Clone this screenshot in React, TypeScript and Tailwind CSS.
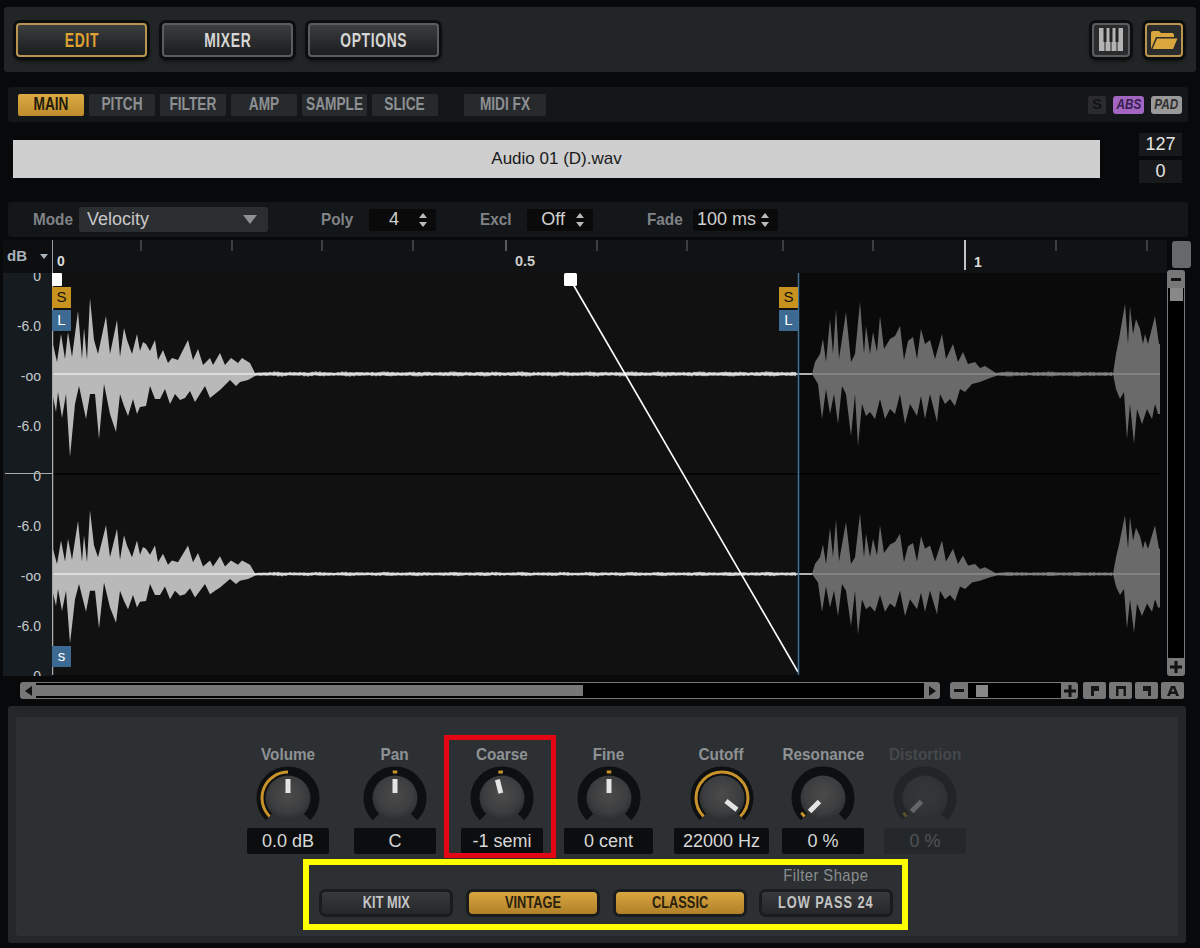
import React from "react";

type Pt = [number, number];

const sans = "font-['Liberation_Sans',sans-serif]";

// wave outlines, read off the picture: [x, height above or below the centre line]
const leftUp: Pt[] = [[52,34],[57,12],[61,40],[65,15],[68,42],[72,17],[78,63],[82,15],[84,46],[87,14],[90,76],[94,34],[98,20],[106,58],[110,20],[117,54],[120,17],[124,46],[127,34],[132,20],[137,40],[140,23],[143,32],[146,30],[150,23],[155,34],[158,14],[163,24],[168,11],[172,16],[178,14],[188,34],[193,14],[198,25],[203,9],[210,16],[213,9],[220,21],[225,9],[231,16],[238,11],[242,16],[250,11],[255,1]];
const leftDown: Pt[] = [[52,18],[56,38],[58,18],[62,44],[66,20],[70,83],[75,30],[79,12],[86,45],[90,20],[95,20],[99,65],[104,10],[110,40],[116,58],[120,20],[124,32],[128,42],[133,25],[137,40],[140,33],[146,32],[150,12],[155,25],[160,25],[165,15],[170,30],[175,20],[180,26],[185,24],[190,17],[195,28],[200,20],[205,12],[210,24],[215,20],[220,16],[230,6],[236,12],[240,8],[248,6],[255,2]];
const rightUp: Pt[] = [[812,0],[815,12],[820,20],[823,35],[826,12],[830,55],[833,20],[836,65],[839,15],[846,62],[851,12],[855,20],[860,72],[864,20],[866,48],[870,20],[873,42],[877,22],[880,58],[884,25],[890,35],[895,38],[900,48],[904,14],[908,33],[913,37],[917,15],[921,45],[925,30],[930,34],[935,15],[942,40],[946,15],[953,30],[958,12],[963,22],[968,10],[975,12],[980,6],[985,8],[996,1]];
const rightDown: Pt[] = [[812,0],[818,10],[822,45],[826,15],[830,40],[834,20],[838,50],[842,12],[846,20],[851,62],[855,20],[858,72],[862,30],[866,42],[870,38],[875,45],[880,25],[885,45],[890,35],[895,40],[900,20],[905,50],[910,30],[917,42],[921,22],[925,45],[930,20],[937,48],[940,20],[945,30],[950,25],[955,32],[960,15],[965,18],[972,10],[980,8],[990,4],[996,2]];
const endUp: Pt[] = [[1113,0],[1116,20],[1119,35],[1125,70],[1128,30],[1130,68],[1133,40],[1136,55],[1140,45],[1143,30],[1145,40],[1148,30],[1155,58],[1159,30],[1160,30]];
const endDown: Pt[] = [[1113,0],[1116,15],[1120,25],[1124,18],[1127,65],[1130,30],[1134,70],[1137,35],[1142,50],[1147,35],[1152,45],[1155,30],[1158,40],[1160,40]];

function noise(from: number, to: number, seed: number): Pt[] {
  const pts: Pt[] = [];
  for (let x = from; x < to; x += 2) {
    const n = Math.sin(x * 1.7 + seed) * 0.5 + Math.sin(x * 0.23 + seed) * 0.7 + Math.sin(x * 0.05 + seed) * 0.4;
    pts.push([x, 1.3 + Math.abs(n)]);
  }
  return pts;
}

function outline(up: Pt[], down: Pt[], cy: number, k: number) {
  const top = up.map(([x, h]) => `${x},${cy - h * k}`);
  const bottom = [...down].reverse().map(([x, h]) => `${x},${cy + h * k}`);
  return [...top, ...bottom].join(" ");
}

function Channel({ cy, k }: { cy: number; k: number }) {
  const left = outline([...leftUp, ...noise(258, 798, 1)], [...leftDown, ...noise(258, 798, 3)], cy, k);
  const right = outline(
    [...rightUp, ...noise(998, 1113, 2), ...endUp],
    [...rightDown, ...noise(998, 1113, 5), ...endDown],
    cy,
    k,
  );
  return (
    <g>
      <polygon points={left} fill="#b9b9b9" />
      <polygon points={right} fill="#6a6a6a" />
      <line x1="52" x2="812" y1={cy} y2={cy} stroke="#e8e8e8" strokeWidth="1.5" />
      <line x1="812" x2="1160" y1={cy} y2={cy} stroke="#999" strokeWidth="1.2" />
    </g>
  );
}

function Waveform() {
  return (
    <svg width="1108" height="402" viewBox="52 273 1108 402" className="block">
      <rect x="52" y="273" width="746" height="402" fill="#111111" />
      <rect x="798" y="273" width="362" height="402" fill="#0a0a0a" />
      <Channel cy={374} k={1} />
      <Channel cy={574} k={0.84} />
      <line x1="52" x2="1160" y1="474" y2="474" stroke="#000" strokeWidth="1.5" />
      <line x1="52.5" x2="52.5" y1="273" y2="675" stroke="#aaa" strokeWidth="1.5" />
      <line x1="570" y1="279" x2="798" y2="672" stroke="#fff" strokeWidth="1.6" />
      <line x1="798.5" x2="798.5" y1="273" y2="675" stroke="#3f7199" strokeWidth="1.5" />
      <rect x="52" y="273" width="10" height="13" rx="1" fill="#fff" />
      <rect x="564" y="273" width="13" height="13" rx="1.5" fill="#fff" />
    </svg>
  );
}

function Ruler() {
  const small = [141, 232, 322, 413, 506, 597, 687, 783, 873, 1056, 1147];
  return (
    <svg width="1115" height="33" viewBox="52 240 1115 33" className="block">
      <rect x="52" y="240" width="1115" height="33" fill="#101214" />
      {small.map((x) => (
        <line key={x} x1={x} x2={x} y1="240" y2="251" stroke={x === 506 ? "#8a8a8a" : "#5c5c5c"} strokeWidth="1.2" />
      ))}
      <line x1="52" x2="52" y1="240" y2="273" stroke="#ccc" strokeWidth="1.5" />
      <line x1="965" x2="965" y1="240" y2="270" stroke="#fff" strokeWidth="1.5" />
      <text x="57" y="266" fill="#ddd" fontSize="14" fontWeight="700" fontFamily="Liberation Sans">0</text>
      <text x="515" y="266" fill="#ccc" fontSize="14.5" fontWeight="700" fontFamily="Liberation Sans">0.5</text>
      <text x="974" y="267" fill="#ddd" fontSize="14" fontWeight="700" fontFamily="Liberation Sans">1</text>
    </svg>
  );
}

function polar(r: number, deg: number): Pt {
  const a = ((deg - 90) * Math.PI) / 180;
  return [40 + r * Math.cos(a), 40 + r * Math.sin(a)];
}

function arc(r: number, from: number, to: number) {
  const [x1, y1] = polar(r, from);
  const [x2, y2] = polar(r, to);
  return `M${x1} ${y1}A${r} ${r} 0 ${to - from > 180 ? 1 : 0} 1 ${x2} ${y2}`;
}

function Knob({ from, to, angle, dim }: { from: number; to: number; angle: number; dim?: boolean }) {
  const id = `knob${from}${to}${angle}${dim ? "d" : ""}`;
  return (
    <svg width="80" height="70" viewBox="0 0 80 70" className={dim ? "block opacity-30" : "block"}>
      <defs>
        <radialGradient id={id} cx="0.5" cy="0.42" r="0.58">
          <stop offset="0" stopColor="#4b4b4c" />
          <stop offset="0.7" stopColor="#3c3d3e" />
          <stop offset="1" stopColor="#2b2d2f" />
        </radialGradient>
      </defs>
      <path d={arc(26.5, -135, 135)} fill="none" stroke="#0e0f10" strokeWidth="10" />
      <path d={arc(26, from, to)} fill="none" stroke="#c8932a" strokeWidth="3" />
      <circle cx="40" cy="40" r="22.5" fill={`url(#${id})`} />
      <rect x="37.5" y="21" width="5" height="14" fill="#e4e4e4" transform={`rotate(${angle} 40 40)`} />
    </svg>
  );
}

function KnobCol({ label, value, from, to, angle, w, dim, className }: {
  label: string; value: string; from: number; to: number; angle: number; w: string; dim?: boolean; className: string;
}) {
  return (
    <div className={`${w} ${className} flex flex-col items-center`}>
      <div className={`h-[20px] leading-[20px] text-[17px] font-bold whitespace-nowrap ${sans} ${dim ? "text-[#45484a]" : "text-[#8f9294]"}`}>
        <span className="inline-block scale-x-[0.9]">{label}</span>
      </div>
      <div className="-mt-[7px]">
        <Knob from={from} to={to} angle={angle} dim={dim} />
      </div>
      <div className={`w-full h-[26px] rounded-[2px] flex items-center justify-center text-[18px] whitespace-nowrap ${sans} ${dim ? "bg-[#25282a] text-[#505355]" : "bg-[#0c0d0e] text-[#d8d8d8]"}`}>
        {value}
      </div>
    </div>
  );
}

function TopButton({ label, active }: { label: string; active?: boolean }) {
  return (
    <div className={`w-[131px] h-[34px] rounded-[4px] border-2 flex items-center justify-center bg-gradient-to-b from-[#3c3d3e] to-[#1c1d1e] shadow-[0_0_0_3px_#0c0d0e,0_3px_5px_#000] text-[21px] font-bold tracking-[1px] whitespace-nowrap ${sans} ${active ? "border-[#b8954e] text-[#dfa332]" : "border-[#5a5c5d] text-[#d6d6d6]"}`}>
      <span className="inline-block scale-x-[0.66]">{label}</span>
    </div>
  );
}

function Tab({ label, active, className }: { label: string; active?: boolean; className: string }) {
  return (
    <div className={`${className} h-[22px] rounded-[2px] flex items-center justify-center text-[18px] font-bold whitespace-nowrap ${sans} ${active ? "bg-gradient-to-b from-[#dcaa42] to-[#bd8c2c] text-[#231c0c]" : "bg-[#272a2d] text-[#8d9092]"}`}>
      <span className="inline-block scale-x-[0.76]">{label}</span>
    </div>
  );
}

function FieldLabel({ text, className }: { text: string; className: string }) {
  return (
    <span className={`${className} text-[17px] font-bold text-[#808386] ${sans}`}>
      <span className="inline-block origin-left scale-x-[0.9]">{text}</span>
    </span>
  );
}

function Stepper({ text, w, pr }: { text: string; w: string; pr: string }) {
  return (
    <div className={`${w} h-[22px] bg-[#0a0a0b] rounded-[2px] flex items-center justify-end pr-[8px] text-[#d0d0d0] text-[18px] whitespace-nowrap ${sans}`}>
      <span className={pr}>{text}</span>
      <svg width="10" height="16" viewBox="0 0 10 16">
        <path d="M5 1 9 6H1Z" fill="#bbb" />
        <path d="M1 10H9L5 15Z" fill="#bbb" />
      </svg>
    </div>
  );
}

function FilterButton({ label, active, spaced }: { label: string; active?: boolean; spaced?: boolean }) {
  return (
    <div className={`w-[128px] h-[22px] rounded-[4px] flex items-center justify-center text-[16px] font-bold whitespace-nowrap shadow-[0_0_0_3px_#191b1d] ${sans} ${spaced ? "tracking-[1.2px]" : ""} ${active ? "bg-gradient-to-b from-[#d8a640] to-[#b08029] text-[#2a210e]" : "bg-gradient-to-b from-[#37393b] to-[#25272a] text-[#c4c4c4]"}`}>
      <span className="inline-block scale-x-[0.8]">{label}</span>
    </div>
  );
}

function SmallSquare({ d }: { d: string }) {
  return (
    <div className="w-[23px] h-[17px] rounded-[2px] bg-[#777] flex items-center justify-center">
      <svg width="14" height="12" viewBox="0 0 14 12">
        <path d={d} fill="#161616" />
      </svg>
    </div>
  );
}

function Marker({ text, tone, pos }: { text: string; tone: string; pos: string }) {
  return (
    <div className={`absolute ${pos} ${tone} w-[19px] h-[21px] flex items-center justify-center text-[15px] ${sans}`}>
      {text}
    </div>
  );
}

export default function App() {
  return (
    <div className="relative w-[1200px] h-[948px] overflow-hidden bg-[#08090a] flex flex-col">
      {/* top bar */}
      <div className="mt-[7px] mx-[4px] h-[65px] rounded-[3px] bg-[#222525] flex items-center pl-[12px] pr-[13px] gap-[15px]">
        <TopButton label="EDIT" active />
        <TopButton label="MIXER" />
        <TopButton label="OPTIONS" />
        <div className="ml-auto w-[38px] h-[34px] rounded-[4px] border-2 border-[#5a5c5d] bg-[#2a2b2c] shadow-[0_0_0_3px_#0c0d0e,0_3px_5px_#000] flex items-center justify-center">
          <svg width="24" height="23" viewBox="0 0 24 23">
            <rect width="24" height="23" fill="#b4b4b4" />
            <rect x="4.5" y="0" width="3" height="14" fill="#232323" />
            <rect x="10.5" y="0" width="3" height="14" fill="#232323" />
            <rect x="16.5" y="0" width="3" height="14" fill="#232323" />
            <rect x="5.5" y="14" width="1" height="9" fill="#232323" />
            <rect x="11.5" y="14" width="1" height="9" fill="#232323" />
            <rect x="17.5" y="14" width="1" height="9" fill="#232323" />
          </svg>
        </div>
        <div className="w-[38px] h-[34px] rounded-[4px] border-2 border-[#b8954e] bg-[#2a2b2c] shadow-[0_0_0_3px_#0c0d0e,0_3px_5px_#000] flex items-center justify-center">
          <svg width="28" height="20" viewBox="0 0 28 20">
            <path d="M1 19V3Q1 1 3 1H9L11 3H22Q24 3 24 5V7H6L1 19Z" fill="#d9a73d" />
            <path d="M7 8.5H27.5L23 19H2.5Z" fill="#d9a73d" />
          </svg>
        </div>
      </div>

      {/* tab row */}
      <div className="mt-[15px] mx-[8px] w-[1180px] h-[35px] rounded-[3px] bg-[#14171a] flex items-center pl-[10px] pr-[6px] gap-[5px]">
        <Tab label="MAIN" active className="w-[66px]" />
        <Tab label="PITCH" className="w-[66px]" />
        <Tab label="FILTER" className="w-[66px]" />
        <Tab label="AMP" className="w-[66px]" />
        <Tab label="SAMPLE" className="w-[65px]" />
        <Tab label="SLICE" className="w-[66px]" />
        <Tab label="MIDI FX" className="w-[82px] ml-[21px]" />
        <div className={`ml-auto w-[18px] h-[18px] rounded-[2px] bg-[#292b2d] text-[#121314] text-[15px] font-bold flex items-center justify-center ${sans}`}>S</div>
        <div className={`ml-[2px] w-[31px] h-[18px] rounded-[3px] bg-[#a266c0] text-[#371d50] text-[15px] font-bold italic flex items-center justify-center ${sans}`}>
          <span className="inline-block scale-x-[0.78]">ABS</span>
        </div>
        <div className={`ml-[2px] w-[31px] h-[18px] rounded-[3px] bg-[#999] text-[#2f2f2f] text-[15px] font-bold italic flex items-center justify-center ${sans}`}>
          <span className="inline-block scale-x-[0.78]">PAD</span>
        </div>
      </div>

      {/* sample zone */}
      <div className="h-[80px] flex items-start">
        <div className={`mt-[18px] ml-[13px] w-[1087px] h-[38px] bg-[#cfcfcf] flex items-center justify-center text-[17px] text-[#1a1a1a] ${sans}`}>
          Audio 01 (D).wav
        </div>
        <div className={`mt-[11px] ml-[39px] w-[43px] flex flex-col gap-[4px] text-[#e6e6e6] text-[18px] ${sans}`}>
          <div className="h-[23px] bg-[#17191a] flex items-center justify-center">127</div>
          <div className="h-[23px] bg-[#17191a] flex items-center justify-center">0</div>
        </div>
      </div>

      {/* mode row */}
      <div className="mx-[8px] w-[1180px] h-[35px] rounded-[3px] bg-[#14171a] flex items-center pl-[25px]">
        <FieldLabel text="Mode" className="w-[46px]" />
        <div className={`w-[189px] h-[25px] rounded-[3px] bg-[#2b2e31] flex items-center justify-between pl-[8px] pr-[11px] text-[18px] text-[#c8c8c8] ${sans}`}>
          Velocity
          <svg width="14" height="9" viewBox="0 0 14 9"><path d="M0 0H14L7 9Z" fill="#8d8f91" /></svg>
        </div>
        <FieldLabel text="Poly" className="ml-[53px] w-[48px]" />
        <Stepper text="4" w="w-[67px]" pr="mr-[19px]" />
        <FieldLabel text="Excl" className="ml-[44px] w-[47px]" />
        <Stepper text="Off" w="w-[66px]" pr="mr-[10px]" />
        <FieldLabel text="Fade" className="ml-[54px] w-[46px]" />
        <Stepper text="100 ms" w="w-[85px]" pr="mr-[4px]" />
      </div>

      {/* waveform */}
      <div className="mt-[3px] h-[436px] flex">
        <div className="ml-[3px] w-[49px] flex flex-col">
          <div className={`h-[33px] bg-[#0d0e0f] flex items-center pl-[4px] gap-[13px] text-[15px] font-bold text-[#a9b3bb] ${sans}`}>
            dB
            <svg width="8" height="5" viewBox="0 0 8 5"><path d="M0 0H8L4 5Z" fill="#a9b3bb" /></svg>
          </div>
          <div className={`relative flex-1 bg-[#161b20] flex flex-col items-end pr-[11px] text-[14px] text-[#c4c8cb] overflow-hidden ${sans}`}>
            {["0", "-6.0", "-oo", "-6.0", "0", "-6.0", "-oo", "-6.0", "0"].map((t, i) => (
              <div key={i} className={`shrink-0 h-[50px] leading-[16px] ${i === 0 ? "-mt-[5px]" : ""}`}>{t}</div>
            ))}
            <div className="absolute left-[2px] right-0 top-[200px] h-px bg-[#aaa]" />
          </div>
        </div>
        <div className="w-[1115px] flex flex-col">
          <Ruler />
          <div className="relative">
            <Waveform />
            <Marker text="S" tone="bg-[#c8921f] text-[#15120a]" pos="left-0 top-[14px]" />
            <Marker text="L" tone="bg-[#3c6a92] text-white" pos="left-0 top-[37px]" />
            <Marker text="S" tone="bg-[#c8921f] text-[#15120a]" pos="left-[727px] top-[14px]" />
            <Marker text="L" tone="bg-[#3c6a92] text-white" pos="left-[727px] top-[37px]" />
            <Marker text="s" tone="bg-[#3c6a92] text-white" pos="left-0 top-[373px]" />
          </div>
        </div>
        <div className="relative w-[18px] flex flex-col">
          <div className="absolute left-[5px] top-[1px] w-[19px] h-[27px] rounded-[3px] bg-[#666869]" />
          <div className="mt-[30px] h-[18px] rounded-t-[3px] bg-[#777] flex items-center justify-center">
            <div className="w-[10px] h-[3px] bg-[#111]" />
          </div>
          <div className="flex-1 bg-black border-x border-[#777] flex justify-center">
            <div className="w-[13px] h-[13px] bg-[#888]" />
          </div>
          <div className="h-[18px] rounded-b-[3px] bg-[#777] flex items-center justify-center">
            <svg width="12" height="12" viewBox="0 0 12 12"><path d="M4.5 0H7.5V4.5H12V7.5H7.5V12H4.5V7.5H0V4.5H4.5Z" fill="#111" /></svg>
          </div>
        </div>
      </div>

      {/* scroll row */}
      <div className="mt-[6px] h-[17px] pl-[20px] flex items-center">
        <div className="w-[16px] h-[17px] rounded-l-[3px] bg-[#777] flex items-center justify-center">
          <svg width="7" height="10" viewBox="0 0 7 10"><path d="M7 0V10L0 5Z" fill="#111" /></svg>
        </div>
        <div className="w-[888px] h-[17px] bg-black border-y border-[#777] flex items-center">
          <div className="w-[547px] h-[11px] bg-[#777]" />
        </div>
        <div className="w-[16px] h-[17px] rounded-r-[3px] bg-[#777] flex items-center justify-center">
          <svg width="7" height="10" viewBox="0 0 7 10"><path d="M0 0V10L7 5Z" fill="#111" /></svg>
        </div>
        <div className="ml-[10px] w-[18px] h-[17px] rounded-l-[3px] bg-[#777] flex items-center justify-center">
          <div className="w-[10px] h-[3px] bg-[#111]" />
        </div>
        <div className="w-[93px] h-[17px] bg-black border-y border-[#777] flex items-center pl-[8px]">
          <div className="w-[12px] h-[12px] bg-[#888]" />
        </div>
        <div className="w-[17px] h-[17px] rounded-r-[3px] bg-[#777] flex items-center justify-center">
          <svg width="12" height="12" viewBox="0 0 12 12"><path d="M4.5 0H7.5V4.5H12V7.5H7.5V12H4.5V7.5H0V4.5H4.5Z" fill="#111" /></svg>
        </div>
        <div className="ml-[5px] flex gap-[3px]">
          <SmallSquare d="M3 1H11V6H6V11H3Z" />
          <SmallSquare d="M2 1H12V11H9.5V4H4.5V11H2Z" />
          <SmallSquare d="M3 1H11V11H8V6H3Z" />
          <SmallSquare d="M5 1H9L13 11H10L9.4 9H4.6L4 11H1ZM5.4 6.5H8.6L7 3Z" />
        </div>
      </div>

      {/* bottom panel */}
      <div className="mt-[7px] ml-[8px] w-[1178px] h-[237px] rounded-[3px] bg-[#23272a] pt-[11px] pl-[8px]">
        <div className="w-[1162px] h-[219px] rounded-[3px] bg-[#2c3033] flex flex-col">
          <div className="pt-[28px] flex">
            <KnobCol label="Volume" value="0.0 dB" from={-135} to={0} angle={0} w="w-[82px]" className="ml-[231px]" />
            <KnobCol label="Pan" value="C" from={-5} to={5} angle={0} w="w-[82px]" className="ml-[25px]" />
            <KnobCol label="Coarse" value="-1 semi" from={-8} to={2} angle={-14} w="w-[82px]" className="ml-[25px]" />
            <KnobCol label="Fine" value="0 cent" from={-5} to={5} angle={0} w="w-[89px]" className="ml-[21px]" />
            <KnobCol label="Cutoff" value="22000 Hz" from={-135} to={135} angle={128} w="w-[95px]" className="ml-[21px]" />
            <KnobCol label="Resonance" value="0 %" from={-135} to={-124} angle={-135} w="w-[82px]" className="ml-[13px]" />
            <KnobCol label="Distortion" value="0 %" from={-135} to={-124} angle={-135} w="w-[82px]" dim className="ml-[20px]" />
          </div>
          <div className="mt-[12px] ml-[306px] flex items-end">
            <FilterButton label="KIT MIX" />
            <div className="ml-[19px]"><FilterButton label="VINTAGE" active /></div>
            <div className="ml-[19px]"><FilterButton label="CLASSIC" active /></div>
            <div className="ml-[18px] flex flex-col items-center">
              <div className={`mb-[7px] text-[17px] leading-[19px] tracking-[0.5px] text-[#8a8d8f] whitespace-nowrap ${sans}`}>
                <span className="inline-block scale-x-[0.87]">Filter Shape</span>
              </div>
              <FilterButton label="LOW PASS 24" spaced />
            </div>
          </div>
        </div>
      </div>

      {/* annotation frames */}
      <div className="absolute left-[444px] top-[735px] w-[112px] h-[123px] border-[5px] border-[#e30613]" />
      <div className="absolute left-[303px] top-[859px] w-[605px] h-[71px] border-[6px] border-[#ffff00]" />
    </div>
  );
}
